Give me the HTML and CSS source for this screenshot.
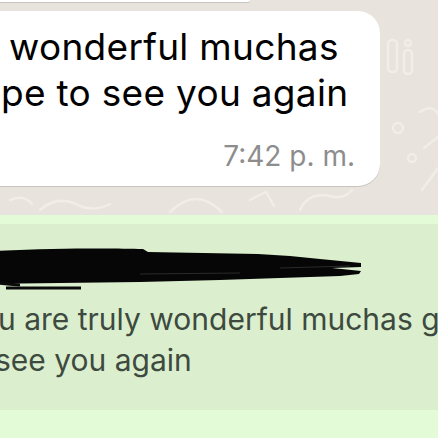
FILE: index.html
```html
<!DOCTYPE html>
<html lang="en">
<head>
    <meta charset="UTF-8">
    <title>Chat</title>
    <link rel="stylesheet" href="styles.css">
</head>
<body>
    <div class="chat">
        <svg class="doodles" width="438" height="438" viewBox="0 0 438 438">
            <rect x="388" y="40" width="9" height="32" rx="4"></rect>
            <rect x="404" y="50" width="8" height="24" rx="4"></rect>
            <circle cx="408" cy="43" r="3"></circle>
            <circle cx="398" cy="128" r="5"></circle>
            <circle cx="412" cy="158" r="4"></circle>
            <path d="M420 112 q14 -10 20 6 q6 14 -6 22 l-10 8"></path>
            <path d="M422 190 l16 -22"></path>
            <path d="M10 200 q14 -6 22 4"></path>
            <path d="M40 210 q18 -16 40 -4 q14 6 30 -2"></path>
            <path d="M170 212 q26 -26 52 0"></path>
            <path d="M250 200 l16 -8 l8 14"></path>
            <path d="M300 210 q8 -18 30 -14 q14 4 22 -6"></path>
        </svg>

        <div class="bubble bubble-prev"></div>

        <div class="bubble bubble-in">
            <div class="msg-line first">wonderful muchas</div>
            <div class="msg-line">pe to see you again</div>
            <div class="msg-time">7:42 p.&nbsp;m.</div>
        </div>

        <div class="bubble bubble-out">
            <div class="quote">
                <div class="quote-name">
                    <svg class="scribble" width="400" height="50" viewBox="0 0 400 50">
                        <path class="ink" d="M0 8 C60 4 130 4 163 5 L168 8 L278 10 L310 12 L340 15 L381 19 L381 23 L352 24 L381 27 L379 30 L360 32 L300 34 L240 36 L160 38 L0 40 Z"></path>
                        <path class="line" d="M0 36 Q20 40 40 41"></path>
                        <path class="line" d="M26 44 L101 44"></path>
                        <path class="gap" d="M160 30 L260 29"></path>
                        <path class="gap" d="M300 24 L370 22"></path>
                    </svg>
                </div>
                <div class="quote-text">
                    <div class="quote-line first">u are truly wonderful muchas gracias</div>
                    <div class="quote-line">see you again</div>
                </div>
            </div>
        </div>
    </div>
</body>
</html>
```

FILE: styles.css
```css
html, body {
    margin: 0;
    padding: 0;
}

body {
    width: 438px;
    height: 438px;
    overflow: hidden;
    background-color: #e8e3dc;
    font-family: "Inter", "Liberation Sans", sans-serif;
}

.chat {
    position: relative;
    display: flex;
    flex-direction: column;
    height: 438px;
    overflow: hidden;
}

.doodles {
    position: absolute;
    left: 0;
    top: 0;
    fill: none;
    stroke: #f1ede7;
    stroke-width: 2.5;
    stroke-linecap: round;
}

.bubble {
    position: relative;
    background-color: #fff;
    box-shadow: 0 1px 0.5px rgba(0, 0, 0, 0.14);
}

.bubble-prev {
    width: 270px;
    height: 3px;
    margin-left: -20px;
    border-radius: 0 0 22px 0;
}

.bubble-in {
    width: 400px;
    margin-top: 9px;
    margin-left: -20px;
    padding: 13px 25px 13px 29px;
    box-sizing: border-box;
    border-radius: 22px;
}

.msg-line {
    font-size: 37px;
    line-height: 46px;
    letter-spacing: 0.3px;
    color: #000;
    white-space: nowrap;
}

.msg-line + .msg-line {
    margin-left: -8px;
}

.msg-time {
    margin-top: 23px;
    font-size: 28px;
    line-height: 34px;
    color: #8d8d8d;
    text-align: right;
}

.bubble-out {
    margin-top: 29px;
    margin-left: -20px;
    width: 500px;
    height: 260px;
    padding-top: 9px;
    background-color: #e3fbd6;
    border-radius: 22px 22px 0 0;
    box-shadow: none;
}

.quote {
    background-color: #dbefce;
    height: 186px;
    box-sizing: border-box;
    padding-left: 20px;
}

.quote-name {
    height: 75px;
    padding-top: 20px;
    box-sizing: border-box;
}

.scribble {
    display: block;
    margin-left: -20px;
}

.scribble .ink {
    fill: #060606;
}

.scribble .line {
    fill: none;
    stroke: #0a0a0a;
    stroke-width: 3;
}

.scribble .gap {
    fill: none;
    stroke: #2a2a2a;
    stroke-width: 1;
}

.quote-text {
    margin-left: -2px;
}

.quote-line {
    font-size: 30px;
    line-height: 41px;
    color: #3e4a40;
    white-space: nowrap;
}

.quote-line + .quote-line {
    margin-left: -3px;
}
```
